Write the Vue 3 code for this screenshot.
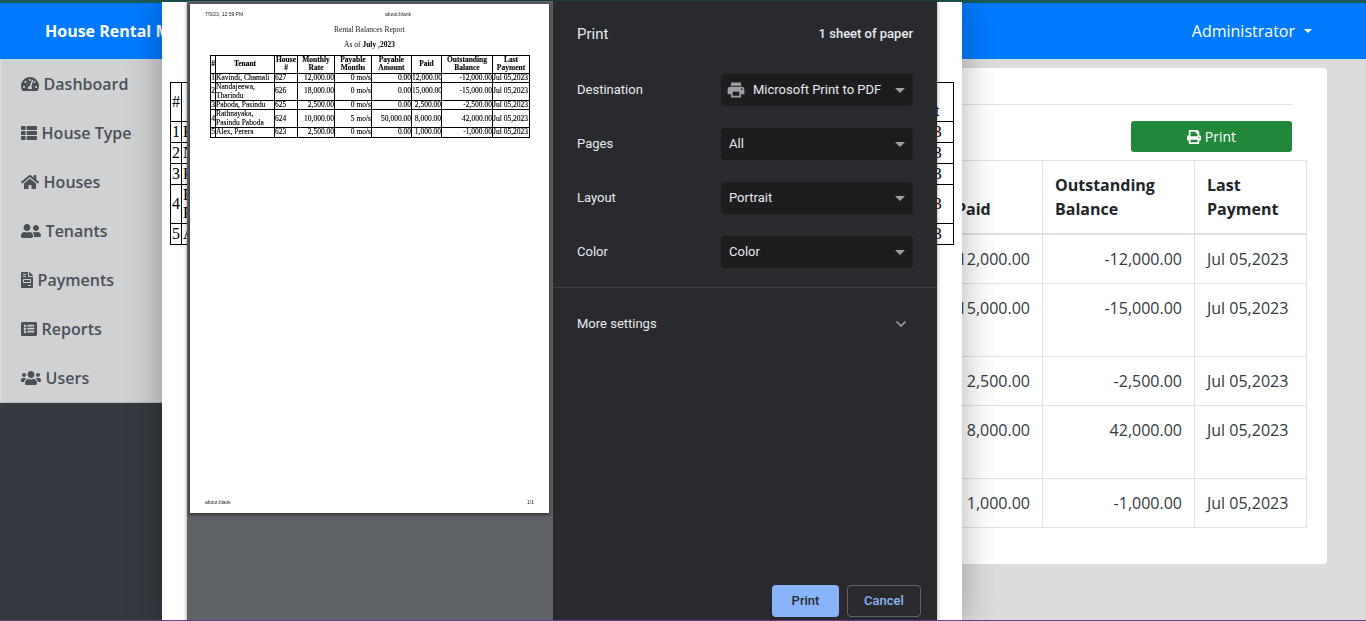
<script setup>
const NAV_ITEMS = [
  { label: 'Dashboard', box: '0 0 576 512', d: 'M288 32C128.94 32 0 160.94 0 320c0 52.8 14.25 102.26 39.06 144.8 5.61 9.62 16.3 15.2 27.44 15.2h443c11.14 0 21.83-5.58 27.44-15.2C561.75 422.26 576 372.8 576 320c0-159.06-128.94-288-288-288zm0 64c14.71 0 26.58 10.13 30.32 23.65-1.11 2.26-2.64 4.23-3.45 6.67l-9.22 27.67c-5.13 3.49-10.97 6.01-17.64 6.01-17.67 0-32-14.33-32-32S270.33 96 288 96zM96 384c-17.67 0-32-14.33-32-32s14.33-32 32-32 32 14.33 32 32-14.33 32-32 32zm48-160c-17.67 0-32-14.33-32-32s14.33-32 32-32 32 14.33 32 32-14.33 32-32 32zm246.77-72.41l-61.33 184C343.13 347.33 352 364.54 352 384c0 11.72-3.38 22.55-8.88 32H232.88c-5.5-9.45-8.88-20.28-8.88-32 0-33.94 26.5-61.43 59.9-63.59l61.34-184.01c4.17-12.56 17.73-19.45 30.36-15.17 12.57 4.19 19.35 17.79 15.17 30.36zm14.66 57.2l15.52-46.55c3.47-1.29 7.13-2.23 11.05-2.23 17.67 0 32 14.33 32 32s-14.33 32-32 32c-11.38-.01-20.89-6.28-26.57-15.22zM480 384c-17.67 0-32-14.33-32-32s14.33-32 32-32 32 14.33 32 32-14.33 32-32 32z' },
  { label: 'House Type', box: '0 0 512 512', d: 'M149.333 216v80c0 13.255-10.745 24-24 24H24c-13.255 0-24-10.745-24-24v-80c0-13.255 10.745-24 24-24h101.333c13.255 0 24 10.745 24 24zM0 376v80c0 13.255 10.745 24 24 24h101.333c13.255 0 24-10.745 24-24v-80c0-13.255-10.745-24-24-24H24c-13.255 0-24 10.745-24 24zM125.333 32H24C10.745 32 0 42.745 0 56v80c0 13.255 10.745 24 24 24h101.333c13.255 0 24-10.745 24-24V56c0-13.255-10.745-24-24-24zm80 448H488c13.255 0 24-10.745 24-24v-80c0-13.255-10.745-24-24-24H205.333c-13.255 0-24 10.745-24 24v80c0 13.255 10.745 24 24 24zm-24-424v80c0 13.255 10.745 24 24 24H488c13.255 0 24-10.745 24-24V56c0-13.255-10.745-24-24-24H205.333c-13.255 0-24 10.745-24 24zm24 264H488c13.255 0 24-10.745 24-24v-80c0-13.255-10.745-24-24-24H205.333c-13.255 0-24 10.745-24 24v80c0 13.255 10.745 24 24 24z' },
  { label: 'Houses', box: '0 0 576 512', d: 'M280.37 148.26L96 300.11V464a16 16 0 0 0 16 16l112.06-.29a16 16 0 0 0 15.92-16V368a16 16 0 0 1 16-16h64a16 16 0 0 1 16 16v95.64a16 16 0 0 0 16 16.05L464 480a16 16 0 0 0 16-16V300L295.67 148.26a12.19 12.19 0 0 0-15.3 0zM571.6 251.47L488 182.56V44.05a12 12 0 0 0-12-12h-56a12 12 0 0 0-12 12v72.61L318.47 43a48 48 0 0 0-61 0L4.34 251.47a12 12 0 0 0-1.6 16.9l25.5 31A12 12 0 0 0 45.15 301l235.22-193.74a12.19 12.19 0 0 1 15.3 0L530.9 301a12 12 0 0 0 16.9-1.6l25.5-31a12 12 0 0 0-1.7-16.93z' },
  { label: 'Tenants', box: '0 0 640 512', d: 'M192 256c61.9 0 112-50.1 112-112S253.9 32 192 32 80 82.1 80 144s50.1 112 112 112zm76.8 32h-8.3c-20.8 10-43.9 16-68.5 16s-47.6-6-68.5-16h-8.3C51.6 288 0 339.6 0 403.2V432c0 26.5 21.5 48 48 48h288c26.5 0 48-21.5 48-48v-28.8c0-63.6-51.6-115.2-115.2-115.2zM480 256c53 0 96-43 96-96s-43-96-96-96-96 43-96 96 43 96 96 96zm48 32h-3.8c-13.9 4.8-28.6 8-44.2 8s-30.3-3.2-44.2-8H432c-20.4 0-39.2 5.9-55.7 15.4 24.4 26.3 39.7 61.2 39.7 99.8v38.4c0 2.2-.5 4.3-.6 6.4H592c26.5 0 48-21.5 48-48 0-61.9-50.1-112-112-112z' },
  { label: 'Payments', box: '0 0 384 512', d: 'M288 256H96v64h192v-64zm89-151L279.1 7c-4.5-4.5-10.6-7-17-7H256v128h128v-6.1c0-6.3-2.5-12.4-7-16.9zm-153 31V0H24C10.7 0 0 10.7 0 24v464c0 13.3 10.7 24 24 24h336c13.3 0 24-10.7 24-24V160H248c-13.2 0-24-10.8-24-24zM64 72c0-4.42 3.58-8 8-8h80c4.42 0 8 3.58 8 8v16c0 4.42-3.58 8-8 8H72c-4.42 0-8-3.58-8-8V72zm0 64c0-4.42 3.58-8 8-8h80c4.42 0 8 3.58 8 8v16c0 4.42-3.58 8-8 8H72c-4.42 0-8-3.58-8-8v-16zm256 304c0 4.42-3.58 8-8 8h-80c-4.42 0-8-3.58-8-8v-16c0-4.42 3.58-8 8-8h80c4.42 0 8 3.58 8 8v16zm0-200v96c0 8.84-7.16 16-16 16H80c-8.84 0-16-7.16-16-16v-96c0-8.84 7.16-16 16-16h224c8.84 0 16 7.16 16 16z' },
  { label: 'Reports', box: '0 0 512 512', d: 'M464 480H48c-26.51 0-48-21.49-48-48V80c0-26.51 21.49-48 48-48h416c26.51 0 48 21.49 48 48v352c0 26.51-21.49 48-48 48zM128 120c-22.091 0-40 17.909-40 40s17.909 40 40 40 40-17.909 40-40-17.909-40-40-40zm0 96c-22.091 0-40 17.909-40 40s17.909 40 40 40 40-17.909 40-40-17.909-40-40-40zm0 96c-22.091 0-40 17.909-40 40s17.909 40 40 40 40-17.909 40-40-17.909-40-40-40zm296-152v-32c0-6.627-5.373-12-12-12H212c-6.627 0-12 5.373-12 12v32c0 6.627 5.373 12 12 12h200c6.627 0 12-5.373 12-12zm0 96v-32c0-6.627-5.373-12-12-12H212c-6.627 0-12 5.373-12 12v32c0 6.627 5.373 12 12 12h200c6.627 0 12-5.373 12-12zm0 96v-32c0-6.627-5.373-12-12-12H212c-6.627 0-12 5.373-12 12v32c0 6.627 5.373 12 12 12h200c6.627 0 12-5.373 12-12z' },
  { label: 'Users', box: '0 0 640 512', d: 'M96 224c35.3 0 64-28.7 64-64s-28.7-64-64-64-64 28.7-64 64 28.7 64 64 64zm448 0c35.3 0 64-28.7 64-64s-28.7-64-64-64-64 28.7-64 64 28.7 64 64 64zm32 32h-64c-17.6 0-33.5 7.1-45.1 18.6 40.3 22.1 68.9 62 75.1 109.4h66c17.7 0 32-14.3 32-32v-32c0-35.3-28.7-64-64-64zm-256 0c61.9 0 112-50.1 112-112S381.9 32 320 32 208 82.1 208 144s50.1 112 112 112zm76.8 32h-8.3c-20.8 10-43.9 16-68.5 16s-47.6-6-68.5-16h-8.3C179.6 288 128 339.6 128 403.2V432c0 26.5 21.5 48 48 48h288c26.5 0 48-21.5 48-48v-28.8c0-63.6-51.6-115.2-115.2-115.2zm-223.7-13.4C161.5 263.1 145.6 256 128 256H64c-35.3 0-64 28.7-64 64v32c0 17.7 14.3 32 32 32h65.9c6.3-47.4 34.9-87.3 75.2-109.4z' },
];

const PRINT_ICON = 'M448 192V77.25c0-8.49-3.37-16.62-9.37-22.63L393.37 9.37c-6-6-14.14-9.37-22.63-9.37H96C78.33 0 64 14.33 64 32v160c-35.35 0-64 28.65-64 64v112c0 8.84 7.16 16 16 16h48v96c0 17.67 14.33 32 32 32h320c17.67 0 32-14.33 32-32v-96h48c8.84 0 16-7.16 16-16V256c0-35.35-28.65-64-64-64zm-64 256H128v-96h256v96zm0-224H128V64h192v48c0 8.84 7.16 16 16 16h48v96zm48 72c-13.25 0-24-10.75-24-24 0-13.26 10.75-24 24-24s24 10.74 24 24c0 13.25-10.75 24-24 24z';

const HEADERS = ['#', 'Tenant', 'House #', 'Monthly Rate', 'Payable Months', 'Payable Amount', 'Paid', 'Outstanding Balance', 'Last Payment'];

const ROWS = [
  { tenant: 'Kavindi, Chamali', house: '627', rate: '12,000.00', months: '0 mo/s', amount: '0.00', paid: '12,000.00', balance: '-12,000.00', last: 'Jul 05,2023' },
  { tenant: 'Nandajeewa, Tharindu', house: '626', rate: '18,000.00', months: '0 mo/s', amount: '0.00', paid: '15,000.00', balance: '-15,000.00', last: 'Jul 05,2023' },
  { tenant: 'Paboda, Pasindu', house: '625', rate: '2,500.00', months: '0 mo/s', amount: '0.00', paid: '2,500.00', balance: '-2,500.00', last: 'Jul 05,2023' },
  { tenant: 'Rathnayaka, Pasindu Paboda', house: '624', rate: '10,000.00', months: '5 mo/s', amount: '50,000.00', paid: '8,000.00', balance: '42,000.00', last: 'Jul 05,2023' },
  { tenant: 'Alex, Perera', house: '623', rate: '2,500.00', months: '0 mo/s', amount: '0.00', paid: '1,000.00', balance: '-1,000.00', last: 'Jul 05,2023' },
];

const SETTINGS = [
  { label: 'Destination', value: 'Microsoft Print to PDF', printer: true },
  { label: 'Pages', value: 'All' },
  { label: 'Layout', value: 'Portrait' },
  { label: 'Color', value: 'Color' },
];
</script>

<template>
  <div class="screen">
    <div class="page">
      <header class="navbar">
        <span class="brand">House Rental Management System</span>
        <span class="user">Administrator<i class="user-caret"></i></span>
      </header>
      <div class="body">
        <aside class="sidebar">
          <nav class="nav">
            <a v-for="item in NAV_ITEMS" :key="item.label" class="nav-item">
              <svg class="nav-icon" :viewBox="item.box" fill="currentColor"><path :d="item.d" /></svg>
              {{ item.label }}
            </a>
          </nav>
        </aside>
        <main class="main">
          <section class="card">
            <div class="card-head">
              <hr class="rule" />
              <div class="actions">
                <button class="print-btn">
                  <svg class="print-icon" viewBox="0 0 512 512" fill="currentColor"><path :d="PRINT_ICON" /></svg>
                  Print
                </button>
              </div>
            </div>
            <table class="balances">
              <colgroup>
                <col style="width: 40px" />
                <col style="width: 170px" />
                <col style="width: 80px" />
                <col style="width: 120px" />
                <col style="width: 110px" />
                <col style="width: 129px" />
                <col style="width: 103px" />
                <col style="width: 152px" />
                <col style="width: 112px" />
              </colgroup>
              <thead>
                <tr>
                  <th v-for="h in HEADERS" :key="h">{{ h }}</th>
                </tr>
              </thead>
              <tbody>
                <tr v-for="(row, index) in ROWS" :key="row.house">
                  <td>{{ index + 1 }}</td>
                  <td>{{ row.tenant }}</td>
                  <td>{{ row.house }}</td>
                  <td class="num">{{ row.rate }}</td>
                  <td class="num">{{ row.months }}</td>
                  <td class="num">{{ row.amount }}</td>
                  <td class="num">{{ row.paid }}</td>
                  <td class="num">{{ row.balance }}</td>
                  <td>{{ row.last }}</td>
                </tr>
              </tbody>
            </table>
          </section>
        </main>
      </div>
    </div>

    <!-- the blank print window and its report, behind the dialog -->
    <div class="print-sheet">
      <table class="report report-big">
        <colgroup>
          <col style="width: 11px" />
          <col style="width: 160px" />
          <col style="width: 60px" />
          <col style="width: 100px" />
          <col style="width: 90px" />
          <col style="width: 100px" />
          <col style="width: 90px" />
          <col style="width: 81px" />
          <col style="width: 91px" />
        </colgroup>
        <thead>
          <tr><th v-for="h in HEADERS" :key="h">{{ h }}</th></tr>
        </thead>
        <tbody>
          <tr v-for="(row, index) in ROWS" :key="row.house">
            <td class="mid">{{ index + 1 }}</td>
            <td>{{ row.tenant }}</td>
            <td>{{ row.house }}</td>
            <td class="num">{{ row.rate }}</td>
            <td class="num">{{ row.months }}</td>
            <td class="num">{{ row.amount }}</td>
            <td class="num">{{ row.paid }}</td>
            <td class="num">{{ row.balance }}</td>
            <td>{{ row.last }}</td>
          </tr>
        </tbody>
      </table>
    </div>

    <div class="print-dialog">
      <div class="preview">
        <div class="paper">
          <div class="paper-head">
            <span>7/5/23, 12:59 PM</span>
            <span class="paper-url">about:blank</span>
          </div>
          <div class="paper-title">Rental Balances Report</div>
          <div class="paper-date">As of <b>July ,2023</b></div>
          <table class="report report-mini">
            <colgroup>
              <col style="width: 5px" />
              <col style="width: 59px" />
              <col style="width: 23px" />
              <col style="width: 37px" />
              <col style="width: 37px" />
              <col style="width: 40px" />
              <col style="width: 30px" />
              <col style="width: 51px" />
              <col style="width: 37px" />
            </colgroup>
            <thead>
              <tr><th v-for="h in HEADERS" :key="h">{{ h }}</th></tr>
            </thead>
            <tbody>
              <tr v-for="(row, index) in ROWS" :key="row.house">
                <td class="mid">{{ index + 1 }}</td>
                <td>{{ row.tenant }}</td>
                <td>{{ row.house }}</td>
                <td class="num">{{ row.rate }}</td>
                <td class="num">{{ row.months }}</td>
                <td class="num">{{ row.amount }}</td>
                <td class="num">{{ row.paid }}</td>
                <td class="num">{{ row.balance }}</td>
                <td>{{ row.last }}</td>
              </tr>
            </tbody>
          </table>
          <div class="paper-foot">
            <span>about:blank</span>
            <span>1/1</span>
          </div>
        </div>
      </div>

      <div class="settings">
        <div class="settings-head">
          <span class="settings-title">Print</span>
          <span class="settings-count">1 sheet of paper</span>
        </div>
        <div class="settings-list">
          <div v-for="s in SETTINGS" :key="s.label" class="setting">
            <span class="setting-label">{{ s.label }}</span>
            <div class="select">
              <svg v-if="s.printer" class="select-printer" viewBox="0 0 24 24" fill="currentColor">
                <path d="M19 8H5c-1.66 0-3 1.34-3 3v6h4v4h12v-4h4v-6c0-1.66-1.34-3-3-3zm-3 11H8v-5h8v5zm3-7c-.55 0-1-.45-1-1s.45-1 1-1 1 .45 1 1-.45 1-1 1zm-1-9H6v4h12V3z" />
              </svg>
              <span class="select-value">{{ s.value }}</span>
              <i class="select-caret"></i>
            </div>
          </div>
        </div>
        <div class="more">
          <span class="setting-label">More settings</span>
          <svg class="chevron" viewBox="0 0 12 8" fill="none" stroke="currentColor" stroke-width="1.6"><path d="M1.5 1.5 6 6l4.5-4.5" /></svg>
        </div>
        <div class="dialog-buttons">
          <button class="btn-primary">Print</button>
          <button class="btn-cancel">Cancel</button>
        </div>
      </div>
    </div>

    <div class="bottom-line"></div>
  </div>
</template>

<style>
html, body {
  margin: 0;
  overflow: hidden;
}
</style>

<style scoped>
.screen {
  position: relative;
  width: 1366px;
  height: 621px;
  overflow: hidden;
  font-family: "Open Sans", sans-serif;
  font-size: 16px;
  color: #212529;
}

.page {
  height: 100%;
  box-sizing: border-box;
  border-top: 3px solid #1b5a56;
  display: flex;
  flex-direction: column;
  background: #dcdcdc;
}

.navbar {
  flex: none;
  height: 56px;
  background: #007bff;
  color: #fff;
  display: flex;
  align-items: center;
  justify-content: space-between;
  padding: 0 54px 0 45px;
}

.brand {
  font-weight: 700;
}

.user {
  display: flex;
  align-items: center;
}

.user-caret {
  margin-left: 9px;
  border-top: 4.5px solid #fff;
  border-left: 4.5px solid transparent;
  border-right: 4.5px solid transparent;
}

.body {
  flex: 1;
  display: flex;
  min-height: 0;
}

.sidebar {
  flex: none;
  width: 250px;
  background: #343a40;
}

.nav {
  display: flex;
  flex-direction: column;
  background: #d0d1d3;
  border-left: 1px solid #dcddde;
  border-bottom: 1px solid #b8babc;
}

.nav-item {
  height: 49px;
  box-sizing: border-box;
  display: flex;
  align-items: center;
  gap: 4.6px;
  padding-left: 20px;
  font-size: 16px;
  font-weight: 600;
  color: #4a5058;
}

.nav-icon {
  height: 16px;
  flex: none;
}

.main {
  flex: 1;
  min-width: 0;
  padding: 9px 39px 0 20px;
}

.card {
  height: 496px;
  box-sizing: border-box;
  background: #fff;
  border-radius: 4px;
  padding: 36px 21px 0 20px;
}

.card-head {
  padding-right: 14px;
}

.rule {
  margin: 0;
  border: none;
  border-top: 1px solid #dee2e6;
}

.actions {
  display: flex;
  justify-content: flex-end;
  margin-top: 16px;
}

.print-btn {
  width: 161px;
  height: 31px;
  padding: 0;
  display: flex;
  align-items: center;
  justify-content: center;
  gap: 4px;
  border: none;
  border-radius: 3px;
  background: #218838;
  color: #fff;
  font: inherit;
  font-size: 14px;
}

.print-icon {
  width: 14px;
  height: 14px;
}

.balances {
  width: 1016px;
  margin-top: 8px;
  border-collapse: collapse;
  table-layout: fixed;
  line-height: 24px;
}

.balances th,
.balances td {
  border: 1px solid #dee2e6;
  padding: 12px;
  vertical-align: top;
}

.balances td {
  color: #343a40;
}

.balances th {
  vertical-align: bottom;
  border-bottom-width: 2px;
  text-align: left;
  font-weight: 700;
}

.balances th:nth-child(7) {
  padding-left: 16px;
}

.balances .num {
  text-align: right;
}

.print-sheet {
  position: absolute;
  left: 162px;
  top: 2px;
  bottom: 0;
  width: 800px;
  box-sizing: border-box;
  padding: 80px 8px 0;
  background: #fff;
  box-shadow: 0 0 32px 2px rgba(0, 0, 0, 0.28);
}

.report {
  border-collapse: collapse;
  table-layout: fixed;
  font-family: "Liberation Serif", serif;
  color: #000;
}

.report th,
.report td {
  border: 1px solid #000;
  padding: 1px;
}

.report th {
  text-align: center;
}

.report .num {
  text-align: right;
}

.report .mid {
  text-align: center;
}

.report-big {
  width: 783px;
  font-size: 16px;
}

.report-big th {
  font-weight: 400;
}

.report-big th:last-child {
  padding-left: 8px;
}

.report-big td:last-child {
  padding-left: 4px;
}

.report-mini {
  width: 320px;
  margin: 6px 0 0 20px;
  font-size: 7.5px;
  line-height: 8.4px;
  -webkit-text-stroke: 0.12px #000;
}

.report-mini th,
.report-mini td {
  padding: 0;
}

.print-dialog {
  position: absolute;
  left: 187px;
  top: 1px;
  bottom: 0;
  width: 750px;
  display: flex;
  font-family: Roboto, sans-serif;
  box-shadow: 0 0 4px rgba(0, 0, 0, 0.4);
}

.preview {
  width: 366px;
  flex: none;
  box-sizing: border-box;
  padding: 3px 0 0 3px;
  background: #5f6368;
}

.paper {
  width: 359px;
  height: 509px;
  box-sizing: border-box;
  padding: 7px 0 0;
  background: #fff;
  color: #222;
  display: flex;
  flex-direction: column;
  box-shadow: 0 1px 3px 1px rgba(0, 0, 0, 0.45);
  filter: blur(0.25px);
}

.paper-head,
.paper-foot {
  display: flex;
  font-family: "Liberation Sans", sans-serif;
  font-size: 5px;
  line-height: 6px;
  padding: 0 15px;
}

.paper-url {
  margin-left: 142px;
}

.paper-foot {
  justify-content: space-between;
  margin-top: auto;
  margin-bottom: 8px;
}

.paper-title,
.paper-date {
  text-align: center;
  font-family: "Liberation Serif", serif;
  font-size: 7.5px;
  line-height: 9px;
}

.paper-title {
  margin-top: 8px;
}

.paper-date {
  margin-top: 6px;
  color: #000;
}

.settings {
  flex: 1;
  background: #292a2d;
  color: #e8eaed;
  font-size: 13px;
  display: flex;
  flex-direction: column;
  padding-bottom: 4px;
  box-sizing: border-box;
}

.settings-head {
  height: 64px;
  box-sizing: border-box;
  padding: 0 24px;
  display: flex;
  align-items: center;
  justify-content: space-between;
}

.settings-title {
  font-size: 15px;
  padding-top: 1px;
}

.settings-count {
  font-weight: 500;
}

.settings-list {
  display: flex;
  flex-direction: column;
  gap: 22px;
  padding: 9px 24px 19px;
  border-bottom: 1px solid #3c4043;
}

.setting {
  display: flex;
  align-items: center;
  justify-content: space-between;
}

.setting-label {
  padding-bottom: 2px;
}

.select {
  width: 192px;
  height: 32px;
  box-sizing: border-box;
  display: flex;
  align-items: center;
  padding: 0 8px;
  border-radius: 4px;
  background: #1d1d1f;
  position: relative;
}

.select-printer {
  width: 20px;
  height: 20px;
  margin: 0 7px 0 -3px;
  flex: none;
  color: #9aa0a6;
}

.select-value {
  flex: 1;
  white-space: nowrap;
  padding-bottom: 2px;
}

.select-caret {
  border-top: 5px solid #9aa0a6;
  border-left: 5px solid transparent;
  border-right: 5px solid transparent;
}

.more {
  height: 72px;
  box-sizing: border-box;
  display: flex;
  align-items: center;
  justify-content: space-between;
  padding: 0 30px 0 24px;
}

.chevron {
  width: 12px;
  height: 8px;
  color: #9aa0a6;
}

.dialog-buttons {
  margin-top: auto;
  display: flex;
  justify-content: flex-end;
  gap: 8px;
  padding-right: 16px;
}

.btn-primary,
.btn-cancel {
  height: 32px;
  padding: 0 0 2px;
  box-sizing: border-box;
  border-radius: 4px;
  font-family: Roboto, sans-serif;
  font-size: 13px;
  font-weight: 500;
}

.btn-primary {
  width: 67px;
  border: none;
  background: #8ab4f8;
  color: #292a2d;
}

.btn-cancel {
  width: 74px;
  border: 1px solid #5f6368;
  background: transparent;
  color: #8ab4f8;
}

.bottom-line {
  position: absolute;
  left: 0;
  right: 0;
  bottom: 0;
  height: 1px;
  background: #6b3a8c;
}
</style>
